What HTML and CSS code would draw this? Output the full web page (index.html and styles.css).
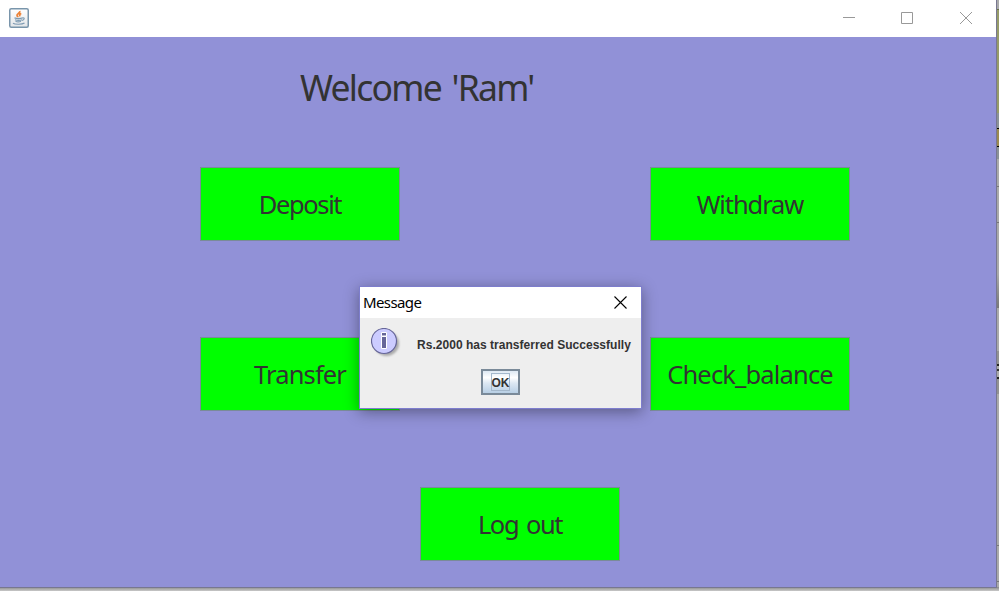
FILE: index.html
```html
<!DOCTYPE html>
<html lang="en">
<head>
<meta charset="utf-8">
<title>Welcome</title>
<link rel="stylesheet" href="styles.css">
</head>
<body>
<div class="desktop">
  <main class="window">
    <header class="titlebar">
      <svg class="java" width="20" height="20" viewBox="0 0 20 20" fill="none">
        <defs><linearGradient id="jb" x1="0" y1="0" x2="0" y2="1"><stop offset="0" stop-color="#fff"/><stop offset="1" stop-color="#e2e5e8"/></linearGradient></defs>
        <rect x=".75" y=".75" width="18.5" height="18.5" rx="1.5" fill="url(#jb)" stroke="#7995ab" stroke-width="1.5"/>
        <path d="M10.800 3c.8 2-3.300 2.800-2.800 4.600.2.700.9 1 .9 1.700M12.300 5.500c-2.300.8-1.700 1.900-1.500 2.900" stroke="#ec8238" stroke-width="1.700"/>
        <path d="M5.500 9.900c2 .8 6 .8 8.300 0M6 11.700c2 .7 5 .7 7 0M6.500 13.300c1.500.6 4 .6 5.500 0M13.500 9.800c2.700-.4 1.800 2.400-.5 2.500M4 15.200c2 1.400 9 1.400 11.500-.2" stroke="#7d9ab2" stroke-width="1.200"/>
      </svg>
      <svg class="controls" width="131" height="14" viewBox="0 0 131 14" fill="none" stroke="#999">
        <path d="M1 6.500h12M59.500 1.500h11v11h-11zM118 1l12 12M130 1l-12 12"/>
      </svg>
    </header>
    <h1 class="heading">Welcome 'Ram'</h1>
    <div class="actions">
      <button class="action deposit"><span>Deposit</span></button>
      <button class="action withdraw"><span>Withdraw</span></button>
      <button class="action transfer"><span>Transfer</span></button>
      <button class="action balance"><span>Check_balance</span></button>
    </div>
    <button class="action logout"><span>Log out</span></button>
  </main>
  <aside class="behind">
    <i class="b1"></i><i class="b2"></i><i class="b3"></i><i class="b4"></i><i class="b5"></i><i class="b6"></i><i class="b7"></i><i class="b8"></i><i class="b9"></i><i class="b10"></i><i class="b11"></i><i class="b12"></i>
  </aside>
  <section class="dialog" role="dialog">
    <header class="dialog-title">
      <span>Message</span>
      <svg width="13" height="13" viewBox="0 0 13 13" fill="none" stroke="#000" stroke-width="1.100"><path d="M.5.500l12 12M12.500.500l-12 12"/></svg>
    </header>
    <div class="dialog-body">
      <svg class="info" width="32" height="32" viewBox="0 0 32 32">
        <defs><filter id="s" x="-20%" y="-20%" width="150%" height="150%"><feGaussianBlur stdDeviation="1.300"/></filter></defs>
        <circle cx="15.500" cy="15.500" r="12.500" fill="#aaa" filter="url(#s)"/>
        <circle cx="13" cy="13" r="12.500" fill="#ccf" stroke="#669" stroke-width="1.200"/>
        <path d="M10.500 4.500h5v3.500h-5zM10.500 8.500h5v12h-5z" fill="#669" stroke="#fff"/>
      </svg>
      <p class="message">Rs.2000 has transferred Successfully</p>
      <button class="ok"><span>OK</span></button>
    </div>
  </section>
</div>
</body>
</html>
```
FILE: styles.css
```css
* { box-sizing: border-box; }
body { margin: 0; overflow: hidden; }
button { padding: 0; margin: 0; border-radius: 0; }
.desktop {
  position: relative;
  display: flex;
  width: 999px;
  height: 591px;
  background: linear-gradient(#888 587px, #999 588px, #c8c8c8 591px);
}
.window {
  width: 997px;
  height: 588px;
  background: #9191d7;
  border-right: 1px solid #777790;
  border-bottom: 1px solid #777790;
}
.titlebar {
  display: flex;
  justify-content: space-between;
  height: 37px;
  padding: 8px 23px 0 9px;
  background: #fff;
}
.controls { margin-top: 3px; }
.heading {
  margin: 27px 0 0 300px;
  height: 47px;
  color: #333;
  font: 400 35.5px/46px "Noto Sans", sans-serif;
  letter-spacing: -1.75px;
  word-spacing: 3px;
  white-space: nowrap;
}
.actions {
  display: grid;
  grid-template-columns: 200px 200px;
  grid-auto-rows: 74px;
  gap: 96px 250px;
  margin: 56px 0 0 200px;
}
.action {
  display: block;
  width: 200px;
  height: 74px;
  background: #0f0;
  border: 1px solid #7a8a99;
  color: #333;
  font: 25.5px/30px "Noto Sans", sans-serif;
  letter-spacing: -.85px;
  white-space: nowrap;
}
.deposit { letter-spacing: -1.4px; }
.withdraw { letter-spacing: -1.1px; }
.logout { margin: 76px 0 0 420px; letter-spacing: -1.4px; word-spacing: 2.5px; }
.behind {
  display: flex;
  flex-direction: column;
  width: 2px;
  height: 587px;
  background: #aaa;
}
.behind i { display: block; flex: none; }
.b1 { height: 9px; background: #aaa; }
.b2 { height: 1px; background: #687044; }
.b3 { height: 103px; background: #969b68; }
.b4 { height: 15px; background: #8b9297; }
.b5 { height: 19px; background: #9b8a50; border-top: 1px solid #000; border-bottom: 1px solid #000; }
.b6 { height: 12px; background: #8b9297; }
.b7 { height: 28px; background: #aaa; border-bottom: 1px solid #777; }
.b8 { height: 36px; background: #aaa; border-bottom: 1px solid #777; }
.b9 { height: 85px; background: linear-gradient(#aaa 60%, #777); }
.b10 { height: 43px; background: #aaa; }
.b11 { height: 43px; background: linear-gradient(#929292 13px, #222 13px 15px, #aaa 15px 18px, #333 18px 20px, #aaa 20px 26px, #222 26px 28px, #929292 28px); }
.b12 { height: 193px; background: linear-gradient(#aaa 151px, #777 151px 152px, #aaa 152px 187px, #777 187px 188px, #aaa 188px); }
.dialog {
  position: absolute;
  left: 359px;
  top: 286px;
  width: 283px;
  height: 123px;
  border: 1px solid #7d7dcd;
  background: #eee;
  box-shadow: 0 3px 14px rgba(0, 0, 0, .38);
}
.dialog-title {
  display: flex;
  justify-content: space-between;
  align-items: center;
  height: 31px;
  padding: 0 14px 1px 3px;
  background: #fff;
  color: #000;
  font: 15px/31px "Noto Sans", sans-serif;
  letter-spacing: -.6px;
}
.dialog-body {
  display: grid;
  grid-template-columns: 47px 1fr;
  grid-template-rows: 41px 26px;
  padding: 10px 0 0 10px;
}
.info { display: block; margin-left: 1px; }
.message {
  margin: 10px 0 0;
  color: #333;
  font: bold 12px/15px "Liberation Sans", sans-serif;
  letter-spacing: .03px;
  white-space: nowrap;
}
.ok {
  grid-column: 1 / -1;
  display: flex;
  align-items: center;
  justify-content: center;
  width: 39px;
  height: 26px;
  margin-left: 111px;
  border: 2px solid #7a8a99;
  background: linear-gradient(#dde8f3, #fff 30%, #dde8f3 55%, #b8cfe5);
  color: #333;
  font: bold 12px/18px "Liberation Sans", sans-serif;
}
.ok span {
  width: 19px;
  height: 18px;
  border: 1px solid #a3b8cc;
  display: flex;
  justify-content: center;
}
```
